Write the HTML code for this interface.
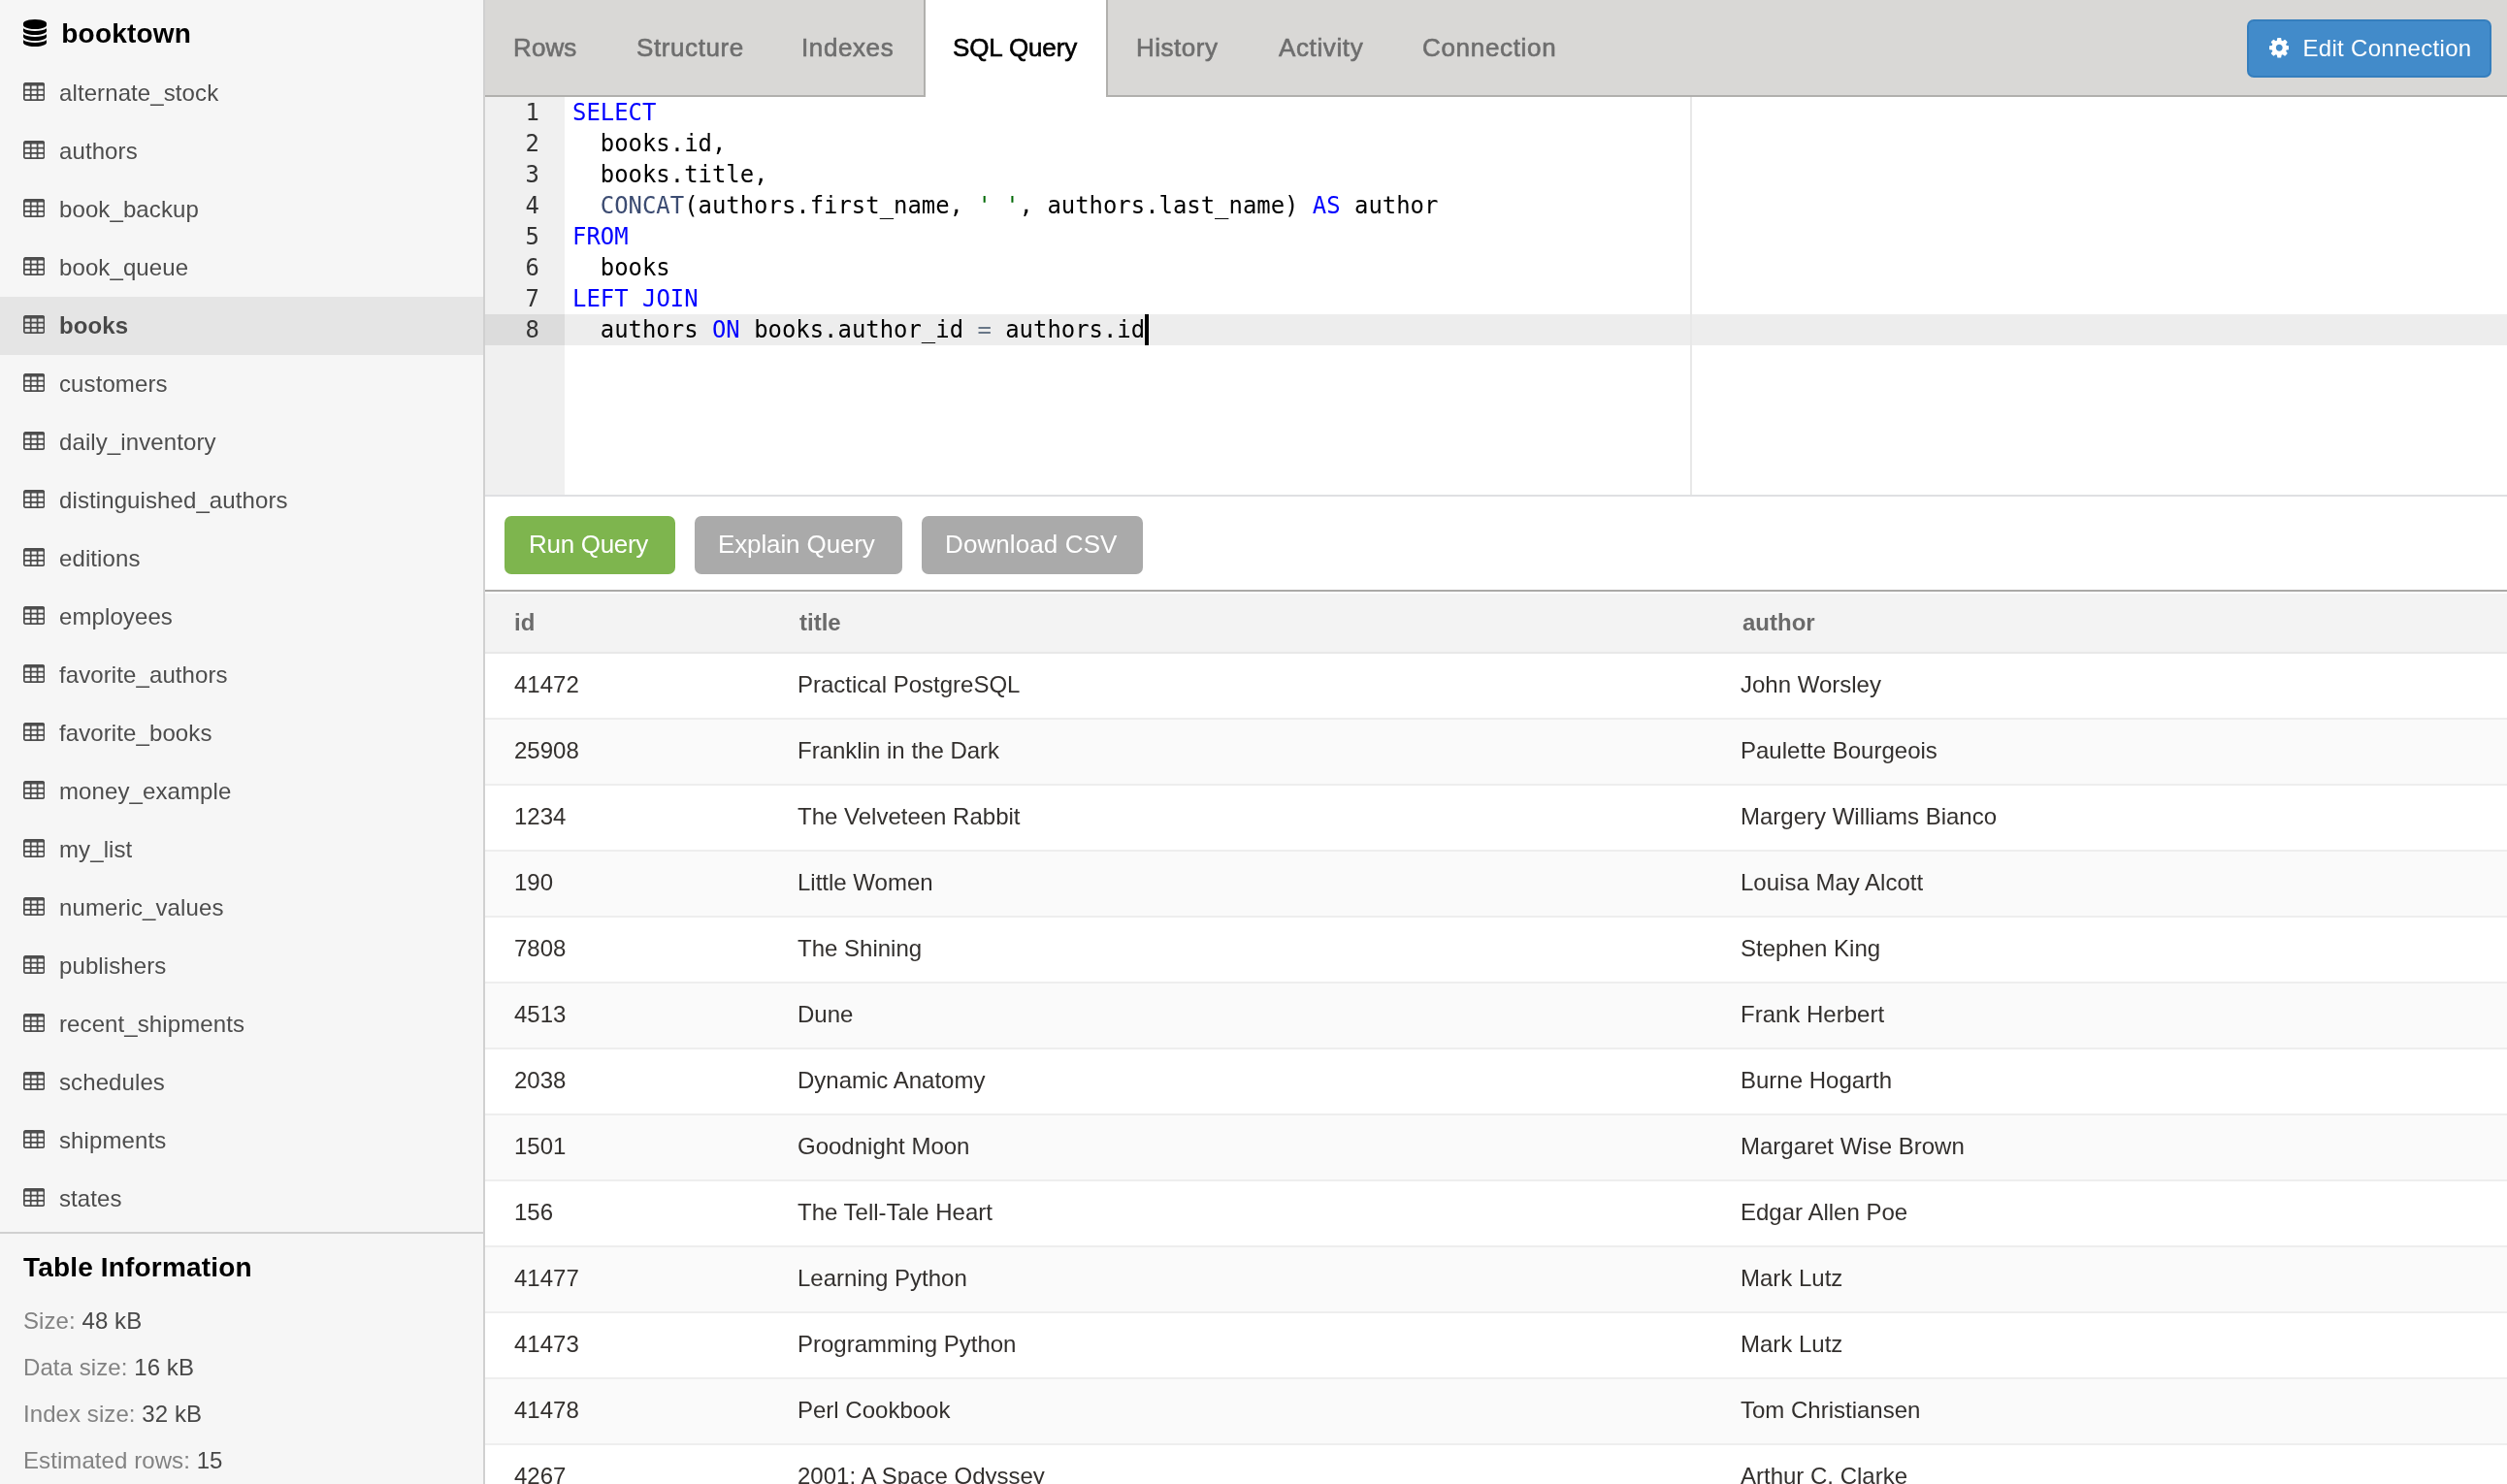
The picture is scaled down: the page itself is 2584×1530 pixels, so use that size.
<!DOCTYPE html><html><head><meta charset="utf-8"><title>pgweb</title><style>
*{box-sizing:border-box;margin:0;padding:0}
html,body{width:2584px;height:1530px;overflow:hidden;background:#fff}
#app{position:absolute;left:0;top:0;width:2584px;height:1530px;overflow:hidden;will-change:transform}
body{position:relative;font-family:"Liberation Sans",sans-serif;font-size:24px;color:#333;-webkit-font-smoothing:antialiased}
#sidebar{position:absolute;left:0;top:0;width:500px;height:1530px;background:#f6f6f6;border-right:2px solid #d0d0d0}
#dbname{position:absolute;left:24px;top:0;height:68px;line-height:68px;font-weight:bold;font-size:28px;color:#000;white-space:nowrap}
#dbname .dbi{position:absolute;left:0;top:20px}
#dbname span{position:absolute;left:39.3px;top:1px;letter-spacing:0.2px}
#tables{position:absolute;left:0;top:66px;width:498px;list-style:none}
#tables li{position:relative;height:60px;line-height:60px;padding-left:61px;font-size:24px;letter-spacing:0.1px;color:#4d4d4d;white-space:nowrap}
#tables li .ti{position:absolute;left:24px;top:19px;fill:#4e4e4e}
#tables li.sel{background:#e5e5e5;font-weight:bold;color:#484848}
#tinfo{position:absolute;left:0;top:1270px;width:498px;height:260px;border-top:2px solid #d0d0d0}
#tinfo h4{position:absolute;left:24px;top:17px;letter-spacing:0.17px;font-size:28px;line-height:36px;font-weight:bold;color:#000;white-space:nowrap}
#tinfo div{position:absolute;left:24px;font-size:24px;line-height:30px;color:#828282;white-space:nowrap;letter-spacing:0.08px}
#tinfo div b{font-weight:normal;color:#484848}
#nav{position:absolute;left:500px;top:0;width:2084px;height:100px;background:#d9d8d6;border-bottom:2px solid #b1b0ad}
#nav .tab{position:absolute;top:0;height:98px;line-height:98px;font-size:26px;color:#6e6e6e;white-space:nowrap;-webkit-text-stroke:0.6px #6e6e6e}
#nav .tabsel{position:absolute;left:452px;top:0;width:190px;height:100px;background:#fff;border-left:2px solid #b1b0ad;border-right:2px solid #b1b0ad}
#nav .tab.on{color:#000;-webkit-text-stroke:0.6px #000}
#editconn{position:absolute;left:1816px;top:20px;width:252px;height:60px;background:#428bca;border:2px solid #357ebd;border-radius:7px;color:#fff;font-size:24px;line-height:56px;white-space:nowrap;letter-spacing:0.3px}
#editconn .cog{position:absolute;left:20.5px;top:17.2px}
#editconn span{position:absolute;left:55.5px;top:0}
#editor{overflow:hidden;position:absolute;left:500px;top:100px;width:2084px;height:410px;background:#fff;font-family:"DejaVu Sans Mono","Liberation Mono",monospace;font-size:23.92px;line-height:32px;color:#000}
#gutter{position:absolute;left:0;top:0;width:82px;height:410px;background:#f0f0f0;color:#333}
#gutter div{height:32px;text-align:right;padding-right:26px}
#gutter div.act{background:#dcdcdc}
#activeline{position:absolute;left:82px;top:224px;width:2002px;height:32px;background:#ededed}
#pm{position:absolute;left:1242px;top:0;width:2px;height:410px;background:#e8e8e8}
#code{position:absolute;left:90px;top:0}
#code div{height:32px;white-space:pre}
.k{color:#00f}.f{color:#3c4c72}.s{color:#036a07}.o{color:#687687}
#cursor{position:absolute;left:680px;top:224px;width:4px;height:32px;background:#000}
#edborder{position:absolute;left:500px;top:510px;width:2084px;height:2px;background:#dfe0e2}
.btn{position:absolute;top:532px;height:60px;line-height:59px;border-radius:7px;color:#fff;font-size:26px;white-space:nowrap}
.btn span{position:absolute;top:0}
#run{left:520px;width:176px;background:#7eb54e}
#explain{left:716px;width:214px;background:#aaa}
#csv{left:950px;width:228px;background:#aaa}
#outborder{position:absolute;left:500px;top:608px;width:2084px;height:2px;background:#aaa9a7}
#results{position:absolute;left:500px;top:612px;width:2084px;font-size:24px}
#results .hr{position:absolute;left:0;top:0;width:2084px;height:62px;background:#f3f3f3;border-bottom:2px solid #e8e8e8;color:#6b6b6b;font-weight:bold;line-height:60px}
#results .r{position:absolute;left:0;width:2084px;height:68px;border-bottom:2px solid #eee;line-height:64px;color:#33302e;background:#fff}
#results .r.alt{background:#fafafa}
#results span{position:absolute;top:0;white-space:nowrap}
#results .c1{left:30px}#results .c2{left:322px}#results .c3{left:1294px}
</style></head><body><div id="app">
<div id="sidebar">
<div id="dbname"><svg class="dbi" viewBox="128 0 1536 1792" width="24" height="28"><path d="M896 768q237 0 443-43t325-127v170q0 69-103 128t-280 93.5-385 34.5-385-34.5-280-93.5-103-128v-170q119 84 325 127t443 43zM896 1536q237 0 443-43t325-127v170q0 69-103 128t-280 93.5-385 34.5-385-34.5-280-93.5-103-128v-170q119 84 325 127t443 43zM896 1152q237 0 443-43t325-127v170q0 69-103 128t-280 93.5-385 34.5-385-34.5-280-93.5-103-128v-170q119 84 325 127t443 43zM896 0q208 0 385 34.5t280 93.5 103 128v128q0 69-103 128t-280 93.5-385 34.5-385-34.5-280-93.5-103-128v-128q0-69 103-128t280-93.5 385-34.5z"/></svg><span>booktown</span></div>
<ul id="tables">
<li><svg class="ti" viewBox="0 0 1664 1408" width="22.3" height="18.9"><path fill-rule="evenodd" d="M160 0h1344q66 0 113 47t47 113v1088q0 66-47 113t-113 47h-1344q-66 0-113-47t-47-113v-1088q0-66 47-113t113-47z M160 256h320q32 0 32 32v192q0 32-32 32h-320q-32 0-32-32v-192q0-32 32-32z M672 256h320q32 0 32 32v192q0 32-32 32h-320q-32 0-32-32v-192q0-32 32-32z M1184 256h320q32 0 32 32v192q0 32-32 32h-320q-32 0-32-32v-192q0-32 32-32z M160 640h320q32 0 32 32v192q0 32-32 32h-320q-32 0-32-32v-192q0-32 32-32z M672 640h320q32 0 32 32v192q0 32-32 32h-320q-32 0-32-32v-192q0-32 32-32z M1184 640h320q32 0 32 32v192q0 32-32 32h-320q-32 0-32-32v-192q0-32 32-32z M160 1024h320q32 0 32 32v192q0 32-32 32h-320q-32 0-32-32v-192q0-32 32-32z M672 1024h320q32 0 32 32v192q0 32-32 32h-320q-32 0-32-32v-192q0-32 32-32z M1184 1024h320q32 0 32 32v192q0 32-32 32h-320q-32 0-32-32v-192q0-32 32-32z"/></svg>alternate_stock</li>
<li><svg class="ti" viewBox="0 0 1664 1408" width="22.3" height="18.9"><path fill-rule="evenodd" d="M160 0h1344q66 0 113 47t47 113v1088q0 66-47 113t-113 47h-1344q-66 0-113-47t-47-113v-1088q0-66 47-113t113-47z M160 256h320q32 0 32 32v192q0 32-32 32h-320q-32 0-32-32v-192q0-32 32-32z M672 256h320q32 0 32 32v192q0 32-32 32h-320q-32 0-32-32v-192q0-32 32-32z M1184 256h320q32 0 32 32v192q0 32-32 32h-320q-32 0-32-32v-192q0-32 32-32z M160 640h320q32 0 32 32v192q0 32-32 32h-320q-32 0-32-32v-192q0-32 32-32z M672 640h320q32 0 32 32v192q0 32-32 32h-320q-32 0-32-32v-192q0-32 32-32z M1184 640h320q32 0 32 32v192q0 32-32 32h-320q-32 0-32-32v-192q0-32 32-32z M160 1024h320q32 0 32 32v192q0 32-32 32h-320q-32 0-32-32v-192q0-32 32-32z M672 1024h320q32 0 32 32v192q0 32-32 32h-320q-32 0-32-32v-192q0-32 32-32z M1184 1024h320q32 0 32 32v192q0 32-32 32h-320q-32 0-32-32v-192q0-32 32-32z"/></svg>authors</li>
<li><svg class="ti" viewBox="0 0 1664 1408" width="22.3" height="18.9"><path fill-rule="evenodd" d="M160 0h1344q66 0 113 47t47 113v1088q0 66-47 113t-113 47h-1344q-66 0-113-47t-47-113v-1088q0-66 47-113t113-47z M160 256h320q32 0 32 32v192q0 32-32 32h-320q-32 0-32-32v-192q0-32 32-32z M672 256h320q32 0 32 32v192q0 32-32 32h-320q-32 0-32-32v-192q0-32 32-32z M1184 256h320q32 0 32 32v192q0 32-32 32h-320q-32 0-32-32v-192q0-32 32-32z M160 640h320q32 0 32 32v192q0 32-32 32h-320q-32 0-32-32v-192q0-32 32-32z M672 640h320q32 0 32 32v192q0 32-32 32h-320q-32 0-32-32v-192q0-32 32-32z M1184 640h320q32 0 32 32v192q0 32-32 32h-320q-32 0-32-32v-192q0-32 32-32z M160 1024h320q32 0 32 32v192q0 32-32 32h-320q-32 0-32-32v-192q0-32 32-32z M672 1024h320q32 0 32 32v192q0 32-32 32h-320q-32 0-32-32v-192q0-32 32-32z M1184 1024h320q32 0 32 32v192q0 32-32 32h-320q-32 0-32-32v-192q0-32 32-32z"/></svg>book_backup</li>
<li><svg class="ti" viewBox="0 0 1664 1408" width="22.3" height="18.9"><path fill-rule="evenodd" d="M160 0h1344q66 0 113 47t47 113v1088q0 66-47 113t-113 47h-1344q-66 0-113-47t-47-113v-1088q0-66 47-113t113-47z M160 256h320q32 0 32 32v192q0 32-32 32h-320q-32 0-32-32v-192q0-32 32-32z M672 256h320q32 0 32 32v192q0 32-32 32h-320q-32 0-32-32v-192q0-32 32-32z M1184 256h320q32 0 32 32v192q0 32-32 32h-320q-32 0-32-32v-192q0-32 32-32z M160 640h320q32 0 32 32v192q0 32-32 32h-320q-32 0-32-32v-192q0-32 32-32z M672 640h320q32 0 32 32v192q0 32-32 32h-320q-32 0-32-32v-192q0-32 32-32z M1184 640h320q32 0 32 32v192q0 32-32 32h-320q-32 0-32-32v-192q0-32 32-32z M160 1024h320q32 0 32 32v192q0 32-32 32h-320q-32 0-32-32v-192q0-32 32-32z M672 1024h320q32 0 32 32v192q0 32-32 32h-320q-32 0-32-32v-192q0-32 32-32z M1184 1024h320q32 0 32 32v192q0 32-32 32h-320q-32 0-32-32v-192q0-32 32-32z"/></svg>book_queue</li>
<li class="sel"><svg class="ti" viewBox="0 0 1664 1408" width="22.3" height="18.9"><path fill-rule="evenodd" d="M160 0h1344q66 0 113 47t47 113v1088q0 66-47 113t-113 47h-1344q-66 0-113-47t-47-113v-1088q0-66 47-113t113-47z M160 256h320q32 0 32 32v192q0 32-32 32h-320q-32 0-32-32v-192q0-32 32-32z M672 256h320q32 0 32 32v192q0 32-32 32h-320q-32 0-32-32v-192q0-32 32-32z M1184 256h320q32 0 32 32v192q0 32-32 32h-320q-32 0-32-32v-192q0-32 32-32z M160 640h320q32 0 32 32v192q0 32-32 32h-320q-32 0-32-32v-192q0-32 32-32z M672 640h320q32 0 32 32v192q0 32-32 32h-320q-32 0-32-32v-192q0-32 32-32z M1184 640h320q32 0 32 32v192q0 32-32 32h-320q-32 0-32-32v-192q0-32 32-32z M160 1024h320q32 0 32 32v192q0 32-32 32h-320q-32 0-32-32v-192q0-32 32-32z M672 1024h320q32 0 32 32v192q0 32-32 32h-320q-32 0-32-32v-192q0-32 32-32z M1184 1024h320q32 0 32 32v192q0 32-32 32h-320q-32 0-32-32v-192q0-32 32-32z"/></svg>books</li>
<li><svg class="ti" viewBox="0 0 1664 1408" width="22.3" height="18.9"><path fill-rule="evenodd" d="M160 0h1344q66 0 113 47t47 113v1088q0 66-47 113t-113 47h-1344q-66 0-113-47t-47-113v-1088q0-66 47-113t113-47z M160 256h320q32 0 32 32v192q0 32-32 32h-320q-32 0-32-32v-192q0-32 32-32z M672 256h320q32 0 32 32v192q0 32-32 32h-320q-32 0-32-32v-192q0-32 32-32z M1184 256h320q32 0 32 32v192q0 32-32 32h-320q-32 0-32-32v-192q0-32 32-32z M160 640h320q32 0 32 32v192q0 32-32 32h-320q-32 0-32-32v-192q0-32 32-32z M672 640h320q32 0 32 32v192q0 32-32 32h-320q-32 0-32-32v-192q0-32 32-32z M1184 640h320q32 0 32 32v192q0 32-32 32h-320q-32 0-32-32v-192q0-32 32-32z M160 1024h320q32 0 32 32v192q0 32-32 32h-320q-32 0-32-32v-192q0-32 32-32z M672 1024h320q32 0 32 32v192q0 32-32 32h-320q-32 0-32-32v-192q0-32 32-32z M1184 1024h320q32 0 32 32v192q0 32-32 32h-320q-32 0-32-32v-192q0-32 32-32z"/></svg>customers</li>
<li><svg class="ti" viewBox="0 0 1664 1408" width="22.3" height="18.9"><path fill-rule="evenodd" d="M160 0h1344q66 0 113 47t47 113v1088q0 66-47 113t-113 47h-1344q-66 0-113-47t-47-113v-1088q0-66 47-113t113-47z M160 256h320q32 0 32 32v192q0 32-32 32h-320q-32 0-32-32v-192q0-32 32-32z M672 256h320q32 0 32 32v192q0 32-32 32h-320q-32 0-32-32v-192q0-32 32-32z M1184 256h320q32 0 32 32v192q0 32-32 32h-320q-32 0-32-32v-192q0-32 32-32z M160 640h320q32 0 32 32v192q0 32-32 32h-320q-32 0-32-32v-192q0-32 32-32z M672 640h320q32 0 32 32v192q0 32-32 32h-320q-32 0-32-32v-192q0-32 32-32z M1184 640h320q32 0 32 32v192q0 32-32 32h-320q-32 0-32-32v-192q0-32 32-32z M160 1024h320q32 0 32 32v192q0 32-32 32h-320q-32 0-32-32v-192q0-32 32-32z M672 1024h320q32 0 32 32v192q0 32-32 32h-320q-32 0-32-32v-192q0-32 32-32z M1184 1024h320q32 0 32 32v192q0 32-32 32h-320q-32 0-32-32v-192q0-32 32-32z"/></svg>daily_inventory</li>
<li><svg class="ti" viewBox="0 0 1664 1408" width="22.3" height="18.9"><path fill-rule="evenodd" d="M160 0h1344q66 0 113 47t47 113v1088q0 66-47 113t-113 47h-1344q-66 0-113-47t-47-113v-1088q0-66 47-113t113-47z M160 256h320q32 0 32 32v192q0 32-32 32h-320q-32 0-32-32v-192q0-32 32-32z M672 256h320q32 0 32 32v192q0 32-32 32h-320q-32 0-32-32v-192q0-32 32-32z M1184 256h320q32 0 32 32v192q0 32-32 32h-320q-32 0-32-32v-192q0-32 32-32z M160 640h320q32 0 32 32v192q0 32-32 32h-320q-32 0-32-32v-192q0-32 32-32z M672 640h320q32 0 32 32v192q0 32-32 32h-320q-32 0-32-32v-192q0-32 32-32z M1184 640h320q32 0 32 32v192q0 32-32 32h-320q-32 0-32-32v-192q0-32 32-32z M160 1024h320q32 0 32 32v192q0 32-32 32h-320q-32 0-32-32v-192q0-32 32-32z M672 1024h320q32 0 32 32v192q0 32-32 32h-320q-32 0-32-32v-192q0-32 32-32z M1184 1024h320q32 0 32 32v192q0 32-32 32h-320q-32 0-32-32v-192q0-32 32-32z"/></svg>distinguished_authors</li>
<li><svg class="ti" viewBox="0 0 1664 1408" width="22.3" height="18.9"><path fill-rule="evenodd" d="M160 0h1344q66 0 113 47t47 113v1088q0 66-47 113t-113 47h-1344q-66 0-113-47t-47-113v-1088q0-66 47-113t113-47z M160 256h320q32 0 32 32v192q0 32-32 32h-320q-32 0-32-32v-192q0-32 32-32z M672 256h320q32 0 32 32v192q0 32-32 32h-320q-32 0-32-32v-192q0-32 32-32z M1184 256h320q32 0 32 32v192q0 32-32 32h-320q-32 0-32-32v-192q0-32 32-32z M160 640h320q32 0 32 32v192q0 32-32 32h-320q-32 0-32-32v-192q0-32 32-32z M672 640h320q32 0 32 32v192q0 32-32 32h-320q-32 0-32-32v-192q0-32 32-32z M1184 640h320q32 0 32 32v192q0 32-32 32h-320q-32 0-32-32v-192q0-32 32-32z M160 1024h320q32 0 32 32v192q0 32-32 32h-320q-32 0-32-32v-192q0-32 32-32z M672 1024h320q32 0 32 32v192q0 32-32 32h-320q-32 0-32-32v-192q0-32 32-32z M1184 1024h320q32 0 32 32v192q0 32-32 32h-320q-32 0-32-32v-192q0-32 32-32z"/></svg>editions</li>
<li><svg class="ti" viewBox="0 0 1664 1408" width="22.3" height="18.9"><path fill-rule="evenodd" d="M160 0h1344q66 0 113 47t47 113v1088q0 66-47 113t-113 47h-1344q-66 0-113-47t-47-113v-1088q0-66 47-113t113-47z M160 256h320q32 0 32 32v192q0 32-32 32h-320q-32 0-32-32v-192q0-32 32-32z M672 256h320q32 0 32 32v192q0 32-32 32h-320q-32 0-32-32v-192q0-32 32-32z M1184 256h320q32 0 32 32v192q0 32-32 32h-320q-32 0-32-32v-192q0-32 32-32z M160 640h320q32 0 32 32v192q0 32-32 32h-320q-32 0-32-32v-192q0-32 32-32z M672 640h320q32 0 32 32v192q0 32-32 32h-320q-32 0-32-32v-192q0-32 32-32z M1184 640h320q32 0 32 32v192q0 32-32 32h-320q-32 0-32-32v-192q0-32 32-32z M160 1024h320q32 0 32 32v192q0 32-32 32h-320q-32 0-32-32v-192q0-32 32-32z M672 1024h320q32 0 32 32v192q0 32-32 32h-320q-32 0-32-32v-192q0-32 32-32z M1184 1024h320q32 0 32 32v192q0 32-32 32h-320q-32 0-32-32v-192q0-32 32-32z"/></svg>employees</li>
<li><svg class="ti" viewBox="0 0 1664 1408" width="22.3" height="18.9"><path fill-rule="evenodd" d="M160 0h1344q66 0 113 47t47 113v1088q0 66-47 113t-113 47h-1344q-66 0-113-47t-47-113v-1088q0-66 47-113t113-47z M160 256h320q32 0 32 32v192q0 32-32 32h-320q-32 0-32-32v-192q0-32 32-32z M672 256h320q32 0 32 32v192q0 32-32 32h-320q-32 0-32-32v-192q0-32 32-32z M1184 256h320q32 0 32 32v192q0 32-32 32h-320q-32 0-32-32v-192q0-32 32-32z M160 640h320q32 0 32 32v192q0 32-32 32h-320q-32 0-32-32v-192q0-32 32-32z M672 640h320q32 0 32 32v192q0 32-32 32h-320q-32 0-32-32v-192q0-32 32-32z M1184 640h320q32 0 32 32v192q0 32-32 32h-320q-32 0-32-32v-192q0-32 32-32z M160 1024h320q32 0 32 32v192q0 32-32 32h-320q-32 0-32-32v-192q0-32 32-32z M672 1024h320q32 0 32 32v192q0 32-32 32h-320q-32 0-32-32v-192q0-32 32-32z M1184 1024h320q32 0 32 32v192q0 32-32 32h-320q-32 0-32-32v-192q0-32 32-32z"/></svg>favorite_authors</li>
<li><svg class="ti" viewBox="0 0 1664 1408" width="22.3" height="18.9"><path fill-rule="evenodd" d="M160 0h1344q66 0 113 47t47 113v1088q0 66-47 113t-113 47h-1344q-66 0-113-47t-47-113v-1088q0-66 47-113t113-47z M160 256h320q32 0 32 32v192q0 32-32 32h-320q-32 0-32-32v-192q0-32 32-32z M672 256h320q32 0 32 32v192q0 32-32 32h-320q-32 0-32-32v-192q0-32 32-32z M1184 256h320q32 0 32 32v192q0 32-32 32h-320q-32 0-32-32v-192q0-32 32-32z M160 640h320q32 0 32 32v192q0 32-32 32h-320q-32 0-32-32v-192q0-32 32-32z M672 640h320q32 0 32 32v192q0 32-32 32h-320q-32 0-32-32v-192q0-32 32-32z M1184 640h320q32 0 32 32v192q0 32-32 32h-320q-32 0-32-32v-192q0-32 32-32z M160 1024h320q32 0 32 32v192q0 32-32 32h-320q-32 0-32-32v-192q0-32 32-32z M672 1024h320q32 0 32 32v192q0 32-32 32h-320q-32 0-32-32v-192q0-32 32-32z M1184 1024h320q32 0 32 32v192q0 32-32 32h-320q-32 0-32-32v-192q0-32 32-32z"/></svg>favorite_books</li>
<li><svg class="ti" viewBox="0 0 1664 1408" width="22.3" height="18.9"><path fill-rule="evenodd" d="M160 0h1344q66 0 113 47t47 113v1088q0 66-47 113t-113 47h-1344q-66 0-113-47t-47-113v-1088q0-66 47-113t113-47z M160 256h320q32 0 32 32v192q0 32-32 32h-320q-32 0-32-32v-192q0-32 32-32z M672 256h320q32 0 32 32v192q0 32-32 32h-320q-32 0-32-32v-192q0-32 32-32z M1184 256h320q32 0 32 32v192q0 32-32 32h-320q-32 0-32-32v-192q0-32 32-32z M160 640h320q32 0 32 32v192q0 32-32 32h-320q-32 0-32-32v-192q0-32 32-32z M672 640h320q32 0 32 32v192q0 32-32 32h-320q-32 0-32-32v-192q0-32 32-32z M1184 640h320q32 0 32 32v192q0 32-32 32h-320q-32 0-32-32v-192q0-32 32-32z M160 1024h320q32 0 32 32v192q0 32-32 32h-320q-32 0-32-32v-192q0-32 32-32z M672 1024h320q32 0 32 32v192q0 32-32 32h-320q-32 0-32-32v-192q0-32 32-32z M1184 1024h320q32 0 32 32v192q0 32-32 32h-320q-32 0-32-32v-192q0-32 32-32z"/></svg>money_example</li>
<li><svg class="ti" viewBox="0 0 1664 1408" width="22.3" height="18.9"><path fill-rule="evenodd" d="M160 0h1344q66 0 113 47t47 113v1088q0 66-47 113t-113 47h-1344q-66 0-113-47t-47-113v-1088q0-66 47-113t113-47z M160 256h320q32 0 32 32v192q0 32-32 32h-320q-32 0-32-32v-192q0-32 32-32z M672 256h320q32 0 32 32v192q0 32-32 32h-320q-32 0-32-32v-192q0-32 32-32z M1184 256h320q32 0 32 32v192q0 32-32 32h-320q-32 0-32-32v-192q0-32 32-32z M160 640h320q32 0 32 32v192q0 32-32 32h-320q-32 0-32-32v-192q0-32 32-32z M672 640h320q32 0 32 32v192q0 32-32 32h-320q-32 0-32-32v-192q0-32 32-32z M1184 640h320q32 0 32 32v192q0 32-32 32h-320q-32 0-32-32v-192q0-32 32-32z M160 1024h320q32 0 32 32v192q0 32-32 32h-320q-32 0-32-32v-192q0-32 32-32z M672 1024h320q32 0 32 32v192q0 32-32 32h-320q-32 0-32-32v-192q0-32 32-32z M1184 1024h320q32 0 32 32v192q0 32-32 32h-320q-32 0-32-32v-192q0-32 32-32z"/></svg>my_list</li>
<li><svg class="ti" viewBox="0 0 1664 1408" width="22.3" height="18.9"><path fill-rule="evenodd" d="M160 0h1344q66 0 113 47t47 113v1088q0 66-47 113t-113 47h-1344q-66 0-113-47t-47-113v-1088q0-66 47-113t113-47z M160 256h320q32 0 32 32v192q0 32-32 32h-320q-32 0-32-32v-192q0-32 32-32z M672 256h320q32 0 32 32v192q0 32-32 32h-320q-32 0-32-32v-192q0-32 32-32z M1184 256h320q32 0 32 32v192q0 32-32 32h-320q-32 0-32-32v-192q0-32 32-32z M160 640h320q32 0 32 32v192q0 32-32 32h-320q-32 0-32-32v-192q0-32 32-32z M672 640h320q32 0 32 32v192q0 32-32 32h-320q-32 0-32-32v-192q0-32 32-32z M1184 640h320q32 0 32 32v192q0 32-32 32h-320q-32 0-32-32v-192q0-32 32-32z M160 1024h320q32 0 32 32v192q0 32-32 32h-320q-32 0-32-32v-192q0-32 32-32z M672 1024h320q32 0 32 32v192q0 32-32 32h-320q-32 0-32-32v-192q0-32 32-32z M1184 1024h320q32 0 32 32v192q0 32-32 32h-320q-32 0-32-32v-192q0-32 32-32z"/></svg>numeric_values</li>
<li><svg class="ti" viewBox="0 0 1664 1408" width="22.3" height="18.9"><path fill-rule="evenodd" d="M160 0h1344q66 0 113 47t47 113v1088q0 66-47 113t-113 47h-1344q-66 0-113-47t-47-113v-1088q0-66 47-113t113-47z M160 256h320q32 0 32 32v192q0 32-32 32h-320q-32 0-32-32v-192q0-32 32-32z M672 256h320q32 0 32 32v192q0 32-32 32h-320q-32 0-32-32v-192q0-32 32-32z M1184 256h320q32 0 32 32v192q0 32-32 32h-320q-32 0-32-32v-192q0-32 32-32z M160 640h320q32 0 32 32v192q0 32-32 32h-320q-32 0-32-32v-192q0-32 32-32z M672 640h320q32 0 32 32v192q0 32-32 32h-320q-32 0-32-32v-192q0-32 32-32z M1184 640h320q32 0 32 32v192q0 32-32 32h-320q-32 0-32-32v-192q0-32 32-32z M160 1024h320q32 0 32 32v192q0 32-32 32h-320q-32 0-32-32v-192q0-32 32-32z M672 1024h320q32 0 32 32v192q0 32-32 32h-320q-32 0-32-32v-192q0-32 32-32z M1184 1024h320q32 0 32 32v192q0 32-32 32h-320q-32 0-32-32v-192q0-32 32-32z"/></svg>publishers</li>
<li><svg class="ti" viewBox="0 0 1664 1408" width="22.3" height="18.9"><path fill-rule="evenodd" d="M160 0h1344q66 0 113 47t47 113v1088q0 66-47 113t-113 47h-1344q-66 0-113-47t-47-113v-1088q0-66 47-113t113-47z M160 256h320q32 0 32 32v192q0 32-32 32h-320q-32 0-32-32v-192q0-32 32-32z M672 256h320q32 0 32 32v192q0 32-32 32h-320q-32 0-32-32v-192q0-32 32-32z M1184 256h320q32 0 32 32v192q0 32-32 32h-320q-32 0-32-32v-192q0-32 32-32z M160 640h320q32 0 32 32v192q0 32-32 32h-320q-32 0-32-32v-192q0-32 32-32z M672 640h320q32 0 32 32v192q0 32-32 32h-320q-32 0-32-32v-192q0-32 32-32z M1184 640h320q32 0 32 32v192q0 32-32 32h-320q-32 0-32-32v-192q0-32 32-32z M160 1024h320q32 0 32 32v192q0 32-32 32h-320q-32 0-32-32v-192q0-32 32-32z M672 1024h320q32 0 32 32v192q0 32-32 32h-320q-32 0-32-32v-192q0-32 32-32z M1184 1024h320q32 0 32 32v192q0 32-32 32h-320q-32 0-32-32v-192q0-32 32-32z"/></svg>recent_shipments</li>
<li><svg class="ti" viewBox="0 0 1664 1408" width="22.3" height="18.9"><path fill-rule="evenodd" d="M160 0h1344q66 0 113 47t47 113v1088q0 66-47 113t-113 47h-1344q-66 0-113-47t-47-113v-1088q0-66 47-113t113-47z M160 256h320q32 0 32 32v192q0 32-32 32h-320q-32 0-32-32v-192q0-32 32-32z M672 256h320q32 0 32 32v192q0 32-32 32h-320q-32 0-32-32v-192q0-32 32-32z M1184 256h320q32 0 32 32v192q0 32-32 32h-320q-32 0-32-32v-192q0-32 32-32z M160 640h320q32 0 32 32v192q0 32-32 32h-320q-32 0-32-32v-192q0-32 32-32z M672 640h320q32 0 32 32v192q0 32-32 32h-320q-32 0-32-32v-192q0-32 32-32z M1184 640h320q32 0 32 32v192q0 32-32 32h-320q-32 0-32-32v-192q0-32 32-32z M160 1024h320q32 0 32 32v192q0 32-32 32h-320q-32 0-32-32v-192q0-32 32-32z M672 1024h320q32 0 32 32v192q0 32-32 32h-320q-32 0-32-32v-192q0-32 32-32z M1184 1024h320q32 0 32 32v192q0 32-32 32h-320q-32 0-32-32v-192q0-32 32-32z"/></svg>schedules</li>
<li><svg class="ti" viewBox="0 0 1664 1408" width="22.3" height="18.9"><path fill-rule="evenodd" d="M160 0h1344q66 0 113 47t47 113v1088q0 66-47 113t-113 47h-1344q-66 0-113-47t-47-113v-1088q0-66 47-113t113-47z M160 256h320q32 0 32 32v192q0 32-32 32h-320q-32 0-32-32v-192q0-32 32-32z M672 256h320q32 0 32 32v192q0 32-32 32h-320q-32 0-32-32v-192q0-32 32-32z M1184 256h320q32 0 32 32v192q0 32-32 32h-320q-32 0-32-32v-192q0-32 32-32z M160 640h320q32 0 32 32v192q0 32-32 32h-320q-32 0-32-32v-192q0-32 32-32z M672 640h320q32 0 32 32v192q0 32-32 32h-320q-32 0-32-32v-192q0-32 32-32z M1184 640h320q32 0 32 32v192q0 32-32 32h-320q-32 0-32-32v-192q0-32 32-32z M160 1024h320q32 0 32 32v192q0 32-32 32h-320q-32 0-32-32v-192q0-32 32-32z M672 1024h320q32 0 32 32v192q0 32-32 32h-320q-32 0-32-32v-192q0-32 32-32z M1184 1024h320q32 0 32 32v192q0 32-32 32h-320q-32 0-32-32v-192q0-32 32-32z"/></svg>shipments</li>
<li><svg class="ti" viewBox="0 0 1664 1408" width="22.3" height="18.9"><path fill-rule="evenodd" d="M160 0h1344q66 0 113 47t47 113v1088q0 66-47 113t-113 47h-1344q-66 0-113-47t-47-113v-1088q0-66 47-113t113-47z M160 256h320q32 0 32 32v192q0 32-32 32h-320q-32 0-32-32v-192q0-32 32-32z M672 256h320q32 0 32 32v192q0 32-32 32h-320q-32 0-32-32v-192q0-32 32-32z M1184 256h320q32 0 32 32v192q0 32-32 32h-320q-32 0-32-32v-192q0-32 32-32z M160 640h320q32 0 32 32v192q0 32-32 32h-320q-32 0-32-32v-192q0-32 32-32z M672 640h320q32 0 32 32v192q0 32-32 32h-320q-32 0-32-32v-192q0-32 32-32z M1184 640h320q32 0 32 32v192q0 32-32 32h-320q-32 0-32-32v-192q0-32 32-32z M160 1024h320q32 0 32 32v192q0 32-32 32h-320q-32 0-32-32v-192q0-32 32-32z M672 1024h320q32 0 32 32v192q0 32-32 32h-320q-32 0-32-32v-192q0-32 32-32z M1184 1024h320q32 0 32 32v192q0 32-32 32h-320q-32 0-32-32v-192q0-32 32-32z"/></svg>states</li>
</ul>
<div id="tinfo"><h4>Table Information</h4>
<div style="top:75px">Size: <b>48 kB</b></div>
<div style="top:123px">Data size: <b>16 kB</b></div>
<div style="top:171px">Index size: <b>32 kB</b></div>
<div style="top:219px">Estimated rows: <b>15</b></div>
</div></div>
<div id="nav"><div class="tabsel"></div>
<div class="tab" style="left:29px;letter-spacing:0.10px">Rows</div>
<div class="tab" style="left:156px;letter-spacing:0.60px">Structure</div>
<div class="tab" style="left:326px;letter-spacing:0.60px">Indexes</div>
<div class="tab on" style="left:482px;letter-spacing:-0.10px">SQL Query</div>
<div class="tab" style="left:671px;letter-spacing:0.50px">History</div>
<div class="tab" style="left:818px;letter-spacing:0.62px">Activity</div>
<div class="tab" style="left:966px;letter-spacing:0.68px">Connection</div>
<div id="editconn"><svg class="cog" viewBox="128 128 1536 1536" width="20.5" height="20.5"><path fill="#fff" d="M1152 896q0-106-75-181t-181-75-181 75-75 181 75 181 181 75 181-75 75-181zM1664 787v222q0 12-8 23t-20 13l-185 28q-19 54-39 91 35 50 107 138 10 12 10 25t-9 23q-27 37-99 108t-94 71q-12 0-26-9l-138-108q-44 23-91 38-16 136-29 186-7 28-36 28h-222q-14 0-24.500-8.500t-11.500-21.500l-28-184q-49-16-90-37l-141 107q-10 9-25 9-14 0-25-11-126-114-165-168-7-10-7-23 0-12 8-23 15-21 51-66.500t54-70.500q-27-50-41-99l-183-27q-13-2-21-12.500t-8-23.500v-222q0-12 8-23t19-13l186-28q14-46 39-92-40-57-107-138-10-12-10-24 0-10 9-23 26-36 98.500-107.500t94.500-71.500q13 0 26 10l138 107q44-23 91-38 16-136 29-186 7-28 36-28h222q14 0 24.500 8.500t11.500 21.500l28 184q49 16 90 37l142-107q9-9 24-9 13 0 25 10 129 119 165 170 7 8 7 22 0 12-8 23-15 21-51 66.500t-54 70.500q26 50 41 98l183 28q13 2 21 12.500t8 23.500z"/></svg><span>Edit Connection</span></div>
</div>
<div id="editor"><div id="gutter">
<div>1</div>
<div>2</div>
<div>3</div>
<div>4</div>
<div>5</div>
<div>6</div>
<div>7</div>
<div class="act">8</div>
</div><div id="activeline"></div><div id="pm"></div><div id="code">
<div><span class="k">SELECT</span></div>
<div>  books.id,</div>
<div>  books.title,</div>
<div>  <span class="f">CONCAT</span>(authors.first_name, <span class="s">' '</span>, authors.last_name) <span class="k">AS</span> author</div>
<div><span class="k">FROM</span></div>
<div>  books</div>
<div><span class="k">LEFT</span> <span class="k">JOIN</span></div>
<div>  authors <span class="k">ON</span> books.author_id <span class="o">=</span> authors.id</div>
</div><div id="cursor"></div></div>
<div id="edborder"></div>
<div class="btn" id="run"><span style="left:25px;letter-spacing:-0.3px">Run Query</span></div><div class="btn" id="explain"><span style="left:24px;letter-spacing:-0.12px">Explain Query</span></div><div class="btn" id="csv"><span style="left:24px;letter-spacing:0.1px">Download CSV</span></div>
<div id="outborder"></div>
<div id="results"><div class="hr"><span class="c1">id</span><span class="c2" style="margin-left:2px">title</span><span class="c3" style="margin-left:2px">author</span></div>
<div class="r" style="top:62px"><span class="c1">41472</span><span class="c2">Practical PostgreSQL</span><span class="c3">John Worsley</span></div>
<div class="r alt" style="top:130px"><span class="c1">25908</span><span class="c2">Franklin in the Dark</span><span class="c3">Paulette Bourgeois</span></div>
<div class="r" style="top:198px"><span class="c1">1234</span><span class="c2">The Velveteen Rabbit</span><span class="c3">Margery Williams Bianco</span></div>
<div class="r alt" style="top:266px"><span class="c1">190</span><span class="c2">Little Women</span><span class="c3">Louisa May Alcott</span></div>
<div class="r" style="top:334px"><span class="c1">7808</span><span class="c2">The Shining</span><span class="c3">Stephen King</span></div>
<div class="r alt" style="top:402px"><span class="c1">4513</span><span class="c2">Dune</span><span class="c3">Frank Herbert</span></div>
<div class="r" style="top:470px"><span class="c1">2038</span><span class="c2">Dynamic Anatomy</span><span class="c3">Burne Hogarth</span></div>
<div class="r alt" style="top:538px"><span class="c1">1501</span><span class="c2">Goodnight Moon</span><span class="c3">Margaret Wise Brown</span></div>
<div class="r" style="top:606px"><span class="c1">156</span><span class="c2">The Tell-Tale Heart</span><span class="c3">Edgar Allen Poe</span></div>
<div class="r alt" style="top:674px"><span class="c1">41477</span><span class="c2">Learning Python</span><span class="c3">Mark Lutz</span></div>
<div class="r" style="top:742px"><span class="c1">41473</span><span class="c2">Programming Python</span><span class="c3">Mark Lutz</span></div>
<div class="r alt" style="top:810px"><span class="c1">41478</span><span class="c2">Perl Cookbook</span><span class="c3">Tom Christiansen</span></div>
<div class="r" style="top:878px"><span class="c1">4267</span><span class="c2">2001: A Space Odyssey</span><span class="c3">Arthur C. Clarke</span></div>
</div>
</div></body></html>
